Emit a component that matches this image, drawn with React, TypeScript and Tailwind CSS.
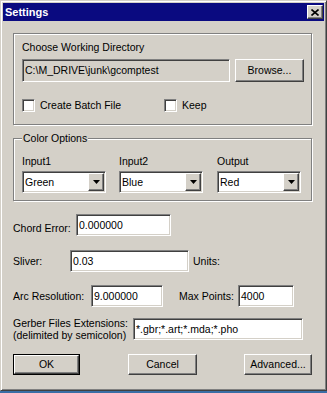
const sunken =
  "border border-t-[#808080] border-l-[#808080] border-b-white border-r-white shadow-[inset_1px_1px_0_#404040,inset_-1px_-1px_0_#d4d0c8]";
const raised =
  "border border-t-white border-l-white border-b-[#404040] border-r-[#404040] shadow-[inset_-1px_-1px_0_#808080]";
const etched = "border border-[#808080] shadow-[inset_1px_1px_0_#fff,1px_1px_0_#fff]";

const TextBox = ({ value, className }: { value: string; className: string }) => (
  <div className={`${sunken} h-[22px] flex items-center pl-[2px] bg-white ${className}`}>
    <span className="whitespace-nowrap">{value}</span>
  </div>
);

const Button = ({ label, className }: { label: string; className: string }) => (
  <button className={`${raised} bg-[#d4d0c8] flex items-center justify-center ${className}`}>{label}</button>
);

const Checkbox = ({ label, className }: { label: string; className?: string }) => (
  <label className={`flex items-center gap-[5px] ${className ?? ""}`}>
    <span className={`${sunken} w-[13px] h-[13px] bg-white block`} />
    <span>{label}</span>
  </label>
);

const Combo = ({ title, value, className }: { title: string; value: string; className?: string }) => (
  <div className={`flex flex-col w-[84px] ${className ?? ""}`}>
    <span>{title}</span>
    <div className={`${sunken} mt-[3px] h-[22px] bg-white flex items-center`}>
      <span className="flex-1 pl-[2px]">{value}</span>
      <span className={`${raised} bg-[#d4d0c8] w-[16px] h-[18px] mr-[1px] flex items-center justify-center`}>
        <svg width="7" height="4" viewBox="0 0 7 4">
          <path d="M0 0h7L3.5 4z" fill="#000" />
        </svg>
      </span>
    </div>
  </div>
);

export default function App() {
  return (
    <div className="w-[327px] h-[393px] bg-[#3a6ea5] font-['Liberation_Sans',Arial,sans-serif] text-[10.5px] leading-[13px] text-black whitespace-nowrap">
      <div className="w-[327px] h-[391px] bg-[#d4d0c8] border border-t-[#d4d0c8] border-l-[#d4d0c8] border-b-[#404040] border-r-[#404040] shadow-[inset_1px_1px_0_#fff,inset_-1px_-1px_0_#808080] p-[2px] flex flex-col">
        {/* title bar */}
        <div className="h-[18px] bg-[#0a0a80] flex items-center justify-between pl-[2px] pr-[1px]">
          <span className="text-white font-bold text-[11px]">Settings</span>
          <span className={`${raised} bg-[#d4d0c8] w-[16px] h-[14px] flex items-center justify-center`}>
            <svg width="8" height="7" viewBox="0 0 8 7">
              <path d="M0.5 0.5l7 6M7.5 0.5l-7 6" stroke="#000" strokeWidth="1.6" />
            </svg>
          </span>
        </div>

        <div className="flex flex-col pl-[10px]">
          {/* working directory */}
          <div className={`${etched} mt-[12px] w-[299px] h-[92px] pt-[7px] pl-[8px] flex flex-col`}>
            <span>Choose Working Directory</span>
            <div className="flex mt-[5px] gap-[5px]">
              <div className={`${sunken} w-[208px] h-[23px] bg-[#d4d0c8] flex items-center pl-[2px]`}>
                C:\M_DRIVE\junk\gcomptest
              </div>
              <Button label="Browse..." className="w-[69px] h-[23px]" />
            </div>
            <div className="flex mt-[17px]">
              <Checkbox label="Create Batch File" className="w-[142px]" />
              <Checkbox label="Keep" />
            </div>
          </div>

          {/* color options */}
          <div className={`${etched} relative mt-[13px] w-[299px] h-[63px] pt-[16px] pl-[8px] flex`}>
            <span className="absolute left-[8px] top-[-7px] bg-[#d4d0c8] px-[1px]">Color Options</span>
            <Combo title="Input1" value="Green" />
            <Combo title="Input2" value="Blue" className="ml-[13px]" />
            <Combo title="Output" value="Red" className="ml-[14px]" />
          </div>

          <div className="flex items-center mt-[13px]">
            <span className="w-[63px] mt-[6px]">Chord Error:</span>
            <TextBox value="0.000000" className="w-[95px]" />
          </div>

          <div className="flex items-center mt-[14px]">
            <span className="w-[57px]">Sliver:</span>
            <TextBox value="0.03" className="w-[119px]" />
            <span className="ml-[4px]">Units:</span>
          </div>

          <div className="flex items-center mt-[13px]">
            <span className="w-[78px]">Arc Resolution:</span>
            <TextBox value="9.000000" className="w-[72px]" />
            <span className="ml-[16px] w-[59px]">Max Points:</span>
            <TextBox value="4000" className="w-[56px]" />
          </div>

          <div className="flex items-center mt-[10px]">
            <div className="w-[120px] flex flex-col leading-[12px]">
              <span>Gerber Files Extensions:</span>
              <span>(delimited by semicolon)</span>
            </div>
            <TextBox value="*.gbr;*.art;*.mda;*.pho" className="w-[170px]" />
          </div>

          <div className="flex items-center mt-[13px]">
            <div className="border border-black w-[67px] h-[21px] flex">
              <Button label="OK" className="flex-1" />
            </div>
            <Button label="Cancel" className="ml-[48px] w-[69px] h-[21px]" />
            <Button label="Advanced..." className="ml-[47px] w-[68px] h-[21px]" />
          </div>
        </div>
      </div>
    </div>
  );
}
